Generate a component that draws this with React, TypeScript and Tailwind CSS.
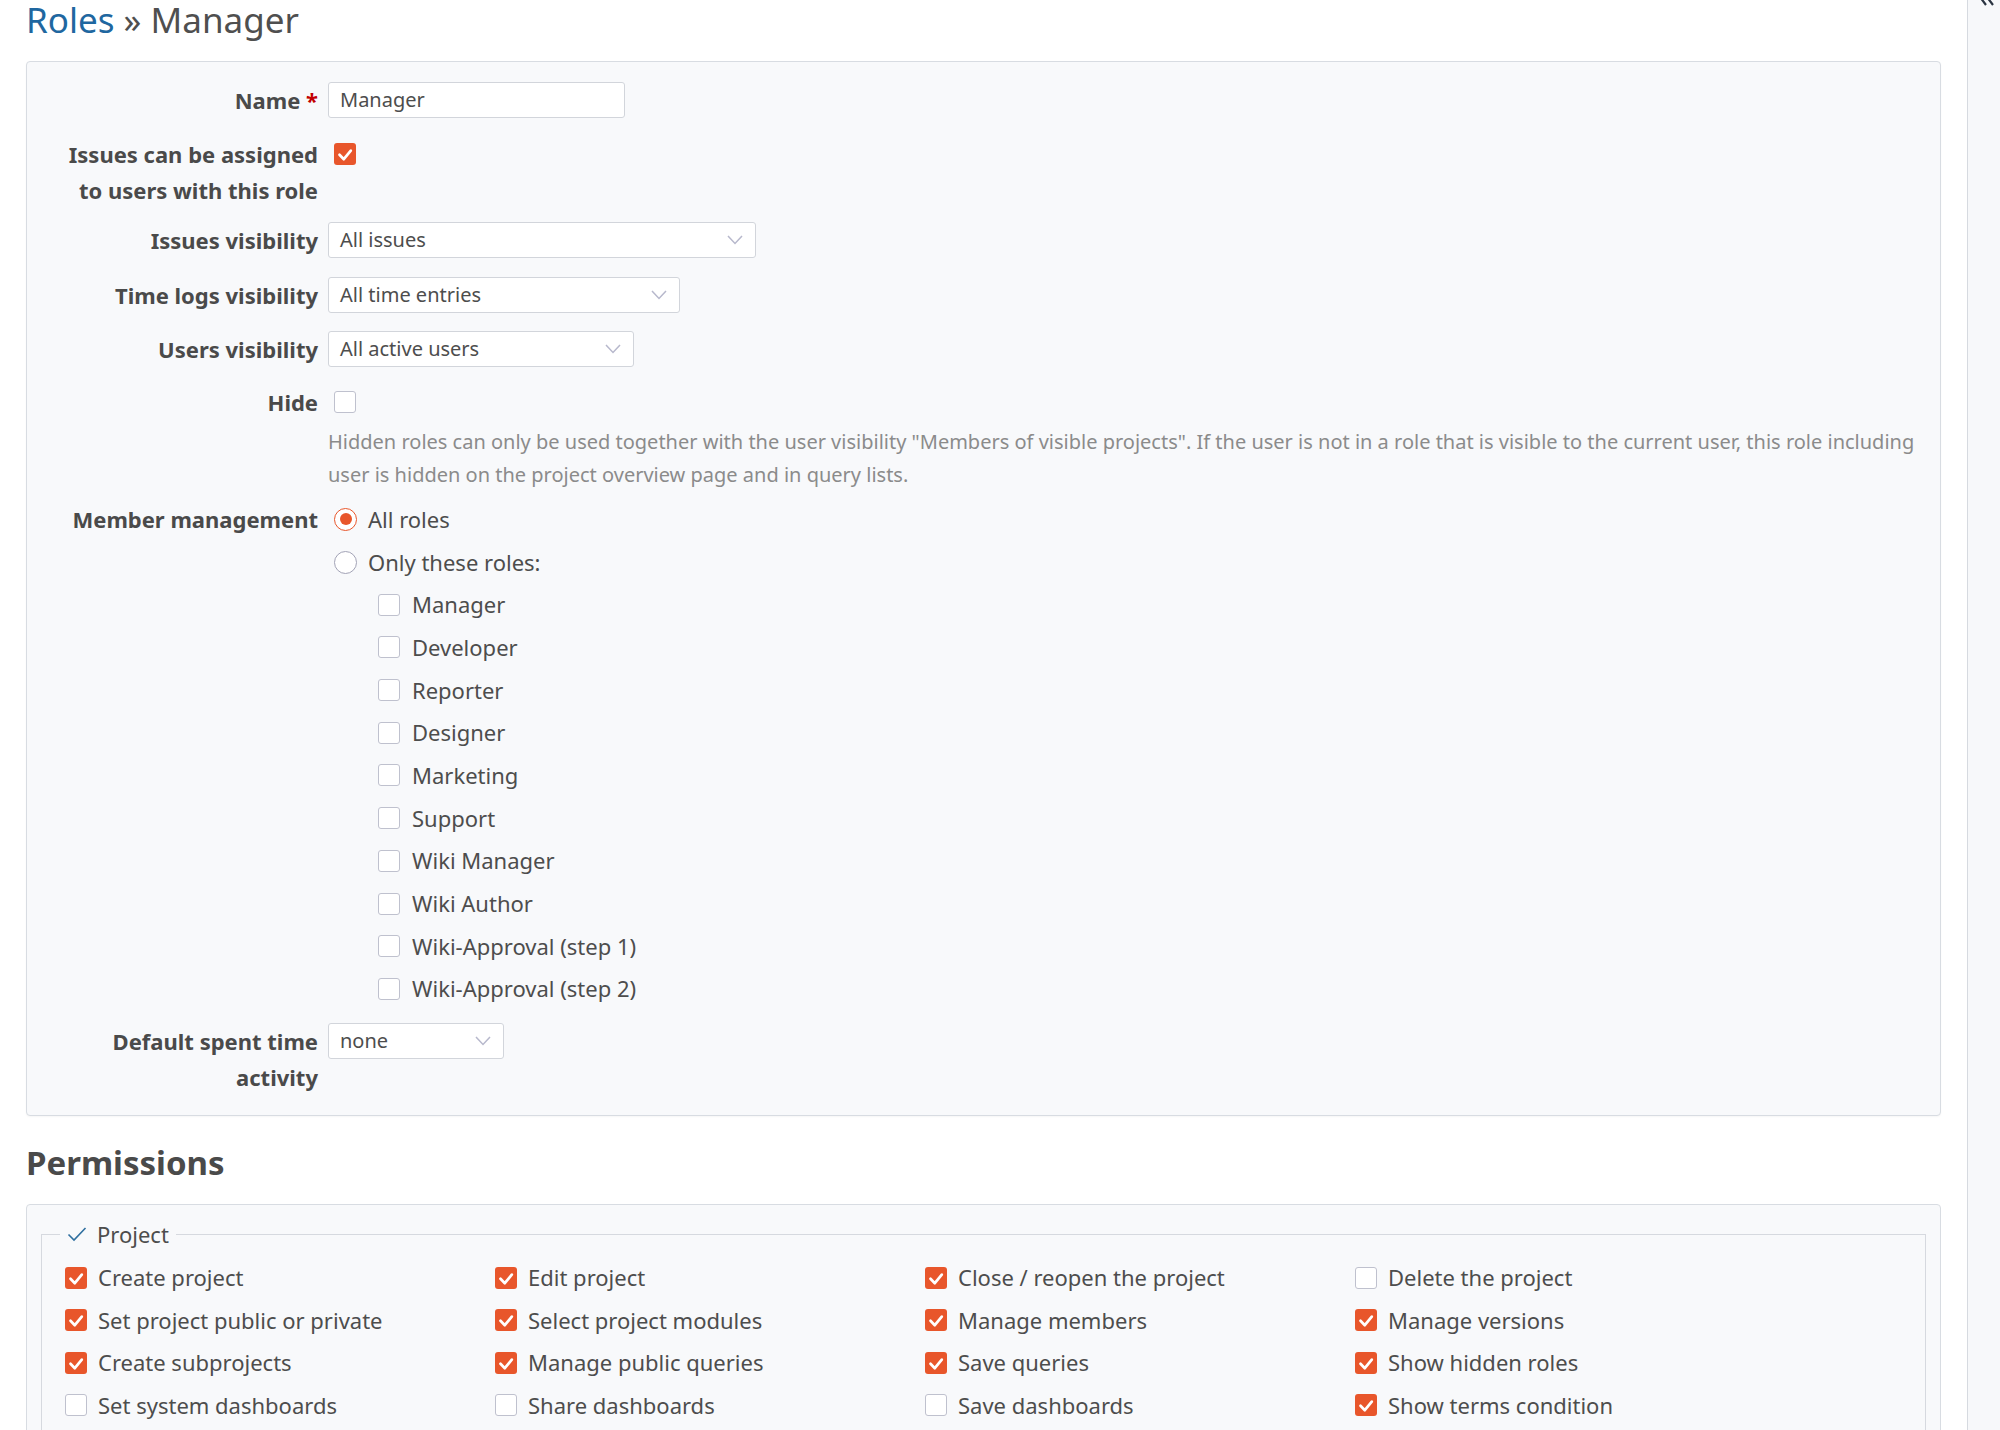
import React from "react";

function Check({ checked }: { checked: boolean }) {
  if (checked) {
    return (
      <span className="inline-flex h-[22px] w-[22px] shrink-0 items-center justify-center rounded-[3px] bg-[#e8562b]">
        <svg viewBox="0 0 22 22" className="h-[22px] w-[22px]">
          <path d="M5.5 11.8 L9.8 16.2 L16.8 7.6" fill="none" stroke="#ffffff" strokeWidth="2.7" strokeLinecap="round" strokeLinejoin="round" />
        </svg>
      </span>
    );
  }
  return <span className="inline-block h-[22px] w-[22px] shrink-0 rounded-[3px] border-[1.5px] border-[#bfc1ce] bg-white" />;
}

function Radio({ checked }: { checked: boolean }) {
  if (checked) {
    return (
      <span className="inline-flex h-[23px] w-[23px] shrink-0 items-center justify-center rounded-full border-[1.5px] border-[#e8562b] bg-white">
        <span className="h-[12px] w-[12px] rounded-full bg-[#e8562b]" />
      </span>
    );
  }
  return <span className="inline-block h-[23px] w-[23px] shrink-0 rounded-full border-[1.5px] border-[#a2a3b6] bg-white" />;
}

function Chevron() {
  return (
    <svg viewBox="0 0 16 10" className="h-[10px] w-[16px]">
      <path d="M1 1 L8 8.5 L15 1" fill="none" stroke="#b7b8cc" strokeWidth="1.5" />
    </svg>
  );
}

function Select({ value, className }: { value: string; className: string }) {
  return (
    <div className={"flex h-[36px] items-center justify-between rounded-[3px] border border-[#d2d5db] bg-white pl-[11px] pr-[12px] text-[20px] text-[#4d4d4d] " + className}>
      <span>{value}</span>
      <Chevron />
    </div>
  );
}

function Label({ children, className = "" }: { children: React.ReactNode; className?: string }) {
  return <div className={"text-right text-[22px] font-bold leading-[36px] text-[#4a4a4a] " + className}>{children}</div>;
}

const roles = [
  "Manager",
  "Developer",
  "Reporter",
  "Designer",
  "Marketing",
  "Support",
  "Wiki Manager",
  "Wiki Author",
  "Wiki-Approval (step 1)",
  "Wiki-Approval (step 2)",
];

const perms: [string, boolean][] = [
  ["Create project", true],
  ["Edit project", true],
  ["Close / reopen the project", true],
  ["Delete the project", false],
  ["Set project public or private", true],
  ["Select project modules", true],
  ["Manage members", true],
  ["Manage versions", true],
  ["Create subprojects", true],
  ["Manage public queries", true],
  ["Save queries", true],
  ["Show hidden roles", true],
  ["Set system dashboards", false],
  ["Share dashboards", false],
  ["Save dashboards", false],
  ["Show terms condition", true],
];

export default function App() {
  return (
    <div className="flex h-[1430px] w-[2000px] overflow-hidden bg-white font-['Noto_Sans','Open_Sans',sans-serif] text-[#4d4d4d]">
      <div className="flex-1 px-[26px]">
        <h1 className="h-[40px] text-[35px] font-normal leading-[40px]">
          <span className="text-[#1f67a0]">Roles</span>
          <span className="text-[#4f4f4f]"> » Manager</span>
        </h1>

        <div className="mt-[21px] rounded-[4px] border border-[#d8dce2] bg-[#f8f9fb] pb-[20px] pr-[18px] pt-[20px] shadow-[0_1px_2px_rgba(0,0,0,0.04)]">
          <div className="grid grid-cols-[291px_1fr] gap-x-[10px]">
            {/* Name */}
            <Label>
              Name <span className="text-[#c20000]">*</span>
            </Label>
            <div>
              <div className="flex h-[36px] w-[297px] items-center rounded-[3px] border border-[#d2d5db] bg-white pl-[11px] text-[20px] text-[#4d4d4d]">
                Manager
              </div>
            </div>

            {/* Issues assignable */}
            <Label className="mt-[18px]">
              Issues can be assigned
              <br />
              to users with this role
            </Label>
            <div className="mt-[18px] flex h-[36px] items-center pl-[6px]">
              <Check checked />
            </div>

            <Label className="mt-[14px]">Issues visibility</Label>
            <div className="mt-[14px]">
              <Select value="All issues" className="w-[428px]" />
            </div>

            <Label className="mt-[19px]">Time logs visibility</Label>
            <div className="mt-[19px]">
              <Select value="All time entries" className="w-[352px]" />
            </div>

            <Label className="mt-[18px]">Users visibility</Label>
            <div className="mt-[18px]">
              <Select value="All active users" className="w-[306px]" />
            </div>

            <Label className="mt-[17px]">Hide</Label>
            <div className="mt-[17px]">
              <div className="flex h-[36px] items-center pl-[6px]">
                <Check checked={false} />
              </div>
              <p className="mt-[5px] text-[20px] leading-[33px] text-[#8b8b8b]">
                Hidden roles can only be used together with the user visibility "Members of visible projects". If the user is not in a role that is visible to the current user, this role including
                <br />
                user is hidden on the project overview page and in query lists.
              </p>
            </div>

            <div className="mt-[7px] flex h-[42.7px] items-center justify-end text-[22px] font-bold text-[#4a4a4a]">Member management</div>
            <div className="mt-[7px] text-[22px] text-[#4d4d4d]">
              <div className="flex h-[42.7px] items-center gap-[11px] pl-[6px]">
                <Radio checked />
                <span>All roles</span>
              </div>
              <div className="flex h-[42.7px] items-center gap-[11px] pl-[6px]">
                <Radio checked={false} />
                <span>Only these roles:</span>
              </div>
              {roles.map((r) => (
                <div key={r} className="flex h-[42.7px] items-center gap-[12px] pl-[50px]">
                  <Check checked={false} />
                  <span>{r}</span>
                </div>
              ))}
            </div>

            <Label className="mt-[13px]">
              Default spent time
              <br />
              activity
            </Label>
            <div className="mt-[13px]">
              <Select value="none" className="w-[176px]" />
            </div>
          </div>
        </div>

        <h2 className="mt-[27px] h-[40px] text-[33px] font-bold leading-[40px] text-[#4a4a4a]">Permissions</h2>

        <div className="mt-[21px] h-[400px] rounded-[4px] border border-[#d8dce2] bg-[#f8f9fb] px-[14px] pt-[15px]">
          <fieldset className="border border-[#d6d9df] px-[23px] pb-[20px]">
            <legend className="ml-[-5px] flex items-center gap-[10px] px-[7px] text-[22px] leading-[28px] text-[#4d4d4d]">
              <svg viewBox="0 0 20 16" className="h-[16px] w-[20px]">
                <path d="M1.5 8.5 L7 14 L18.5 2" fill="none" stroke="#2f6f9f" strokeWidth="1.6" />
              </svg>
              <span>Project</span>
            </legend>
            <div className="mt-[8px] grid grid-cols-[430px_430px_430px_430px] text-[22px] text-[#4d4d4d]">
              {perms.map(([p, c]) => (
                <div key={p} className="flex h-[42.5px] items-center gap-[11px]">
                  <Check checked={c} />
                  <span>{p}</span>
                </div>
              ))}
            </div>
          </fieldset>
        </div>
      </div>

      <div className="w-[33px] shrink-0 border-l border-[#d6dae0] bg-[#f7f8fa]">
        <svg viewBox="0 0 20 20" className="ml-[8px] mt-[-13px] h-[20px] w-[20px]">
          <path d="M10 2 L4 10 L10 18 M17 2 L11 10 L17 18" fill="none" stroke="#2b3441" strokeWidth="2.2" />
        </svg>
      </div>
    </div>
  );
}
